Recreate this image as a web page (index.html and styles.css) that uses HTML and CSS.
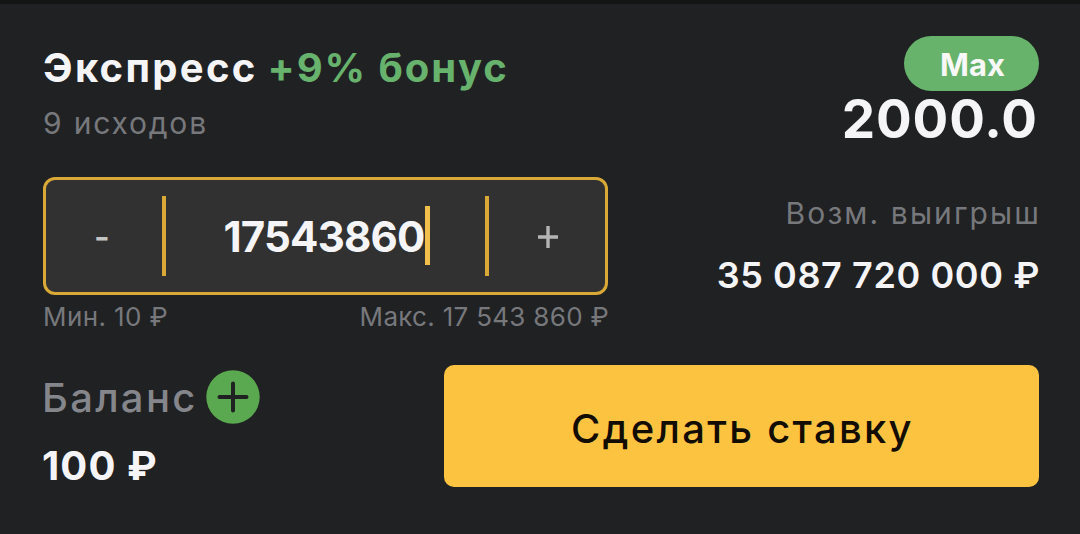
FILE: index.html
```html
<!DOCTYPE html>
<html lang="ru">
  <head>
    <meta charset="UTF-8" />
    <meta name="viewport" content="width=device-width, initial-scale=1.0" />
    <title>Экспресс</title>
    <link rel="stylesheet" href="styles.css">
  </head>
  <body>
    <div class="coupon">
      <div class="top">
        <div class="left">
          <div class="title">
            <span class="name">Экспресс</span>
            <span class="bonus">+9% бонус</span>
          </div>
          <div class="events">9 исходов</div>
          <div class="stake">
            <button type="button" class="step minus">-</button>
            <div class="amount"><span class="value">17543860</span><span class="caret"></span></div>
            <button type="button" class="step plus">
              <svg width="20" height="22" viewBox="0 0 20 22">
                <path d="M0 11H20M10 0V22" stroke="#b4b4b4" stroke-width="3.4" />
              </svg>
            </button>
          </div>
          <div class="limits">
            <span class="min">Мин. 10 ₽</span>
            <span class="max">Макс. 17 543 860 ₽</span>
          </div>
        </div>
        <div class="right">
          <button type="button" class="max-btn">Max</button>
          <div class="odds">2000.0</div>
          <div class="win-label">Возм. выигрыш</div>
          <div class="win">35 087 720 000 ₽</div>
        </div>
      </div>
      <div class="bottom">
        <div class="balance">
          <div class="balance-row">
            <span class="balance-label">Баланс</span>
            <svg width="54" height="54" viewBox="0 0 54 54">
              <circle cx="27" cy="27" r="26.7" fill="#5aa84f" />
              <path d="M13.5 27H40.5M27 13.5V40.5" stroke="#202123" stroke-width="4" stroke-linecap="round" />
            </svg>
          </div>
          <div class="balance-sum">100 ₽</div>
        </div>
        <button type="button" class="bet"><span class="bet-text">Сделать ставку</span></button>
      </div>
    </div>
  </body>
</html>
```
FILE: styles.css
```css
* {
  box-sizing: border-box;
  font-family: "Inter", sans-serif;
}
body {
  margin: 0;
  background-color: #202123;
}
button {
  border: none;
  padding: 0;
  margin: 0;
}
.coupon {
  height: 534px;
  padding: 31px 41px 0 43px;
  border-top: 4px solid #131514;
  white-space: nowrap;
}
.top {
  display: flex;
  justify-content: space-between;
  height: 330px;
}
.left {
  width: 565px;
  padding-top: 5px;
}
.title {
  display: flex;
  gap: 10px;
  font-size: 40px;
  font-weight: 700;
  line-height: 55px;
}
.name {
  color: #f5f5f7;
  letter-spacing: 2.3px;
}
.bonus {
  color: #67b26c;
  letter-spacing: 1.9px;
}
.events {
  color: #77787c;
  font-size: 30px;
  letter-spacing: 1.8px;
  line-height: 56px;
}
.stake {
  display: flex;
  align-items: center;
  height: 118px;
  margin-top: 26px;
  border: 3px solid #d9a836;
  border-radius: 12px;
  background-color: #313131;
}
.step {
  display: flex;
  align-items: center;
  justify-content: center;
  height: 80px;
  width: 120px;
  background: none;
  color: #c4c4c4;
  font-size: 34px;
  font-weight: 600;
}
.minus {
  border-right: 4px solid #d9a836;
  padding-right: 4px;
}
.plus {
  border-left: 4px solid #d9a836;
  padding: 2px 0 0 2px;
}
.amount {
  flex: 1;
  display: flex;
  align-items: center;
  justify-content: center;
  padding-left: 2px;
  color: #f5f5f7;
  font-size: 42px;
  font-weight: 700;
  letter-spacing: -0.8px;
}
.caret {
  width: 5px;
  height: 59px;
  margin-top: -2px;
  background-color: #f3bf4b;
}
.limits {
  display: flex;
  justify-content: space-between;
  color: #77787c;
  font-size: 26px;
  letter-spacing: 0.4px;
  line-height: 43px;
}
.max {
  letter-spacing: 0.3px;
  margin-right: -1px;
}
.right {
  display: flex;
  flex-direction: column;
  align-items: flex-end;
}
.max-btn {
  width: 135px;
  height: 55px;
  margin-top: 1px;
  border-radius: 28px;
  background-color: #67b36c;
  color: #f8f8f8;
  font-size: 31px;
  font-weight: 700;
  line-height: 58px;
  padding-left: 2px;
}
.odds {
  color: #f5f5f7;
  font-size: 53px;
  font-weight: 700;
  letter-spacing: 0.9px;
  line-height: 57px;
  margin-right: 1px;
}
.win-label {
  margin-top: 45px;
  margin-right: -2px;
  color: #77787c;
  font-size: 30px;
  letter-spacing: 2.1px;
  line-height: 40px;
}
.win {
  margin-top: 17px;
  margin-right: -1px;
  color: #f5f5f7;
  font-size: 36px;
  font-weight: 600;
  letter-spacing: 0.6px;
  line-height: 50px;
}
.bottom {
  display: flex;
  justify-content: space-between;
}
.balance-row {
  display: flex;
  align-items: center;
  gap: 8px;
  height: 64px;
}
.balance-label {
  color: #85868b;
  font-size: 40px;
  font-weight: 500;
  letter-spacing: 2.3px;
  margin-left: -1px;
}
.balance-sum {
  margin-top: 12px;
  color: #f5f5f7;
  font-size: 40px;
  font-weight: 700;
  letter-spacing: 1.1px;
  line-height: 50px;
  margin-left: -1px;
}
.bet {
  width: 595px;
  height: 122px;
  border-radius: 10px;
  background-color: #fcc341;
  color: #120c02;
  font-size: 40px;
  font-weight: 500;
  letter-spacing: 2.3px;
  padding: 5px 0 0 2px;
}
```
